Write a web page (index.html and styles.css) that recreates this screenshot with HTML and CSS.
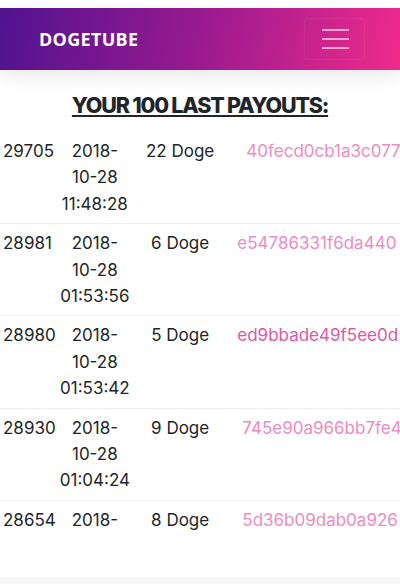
FILE: index.html
```html
<!DOCTYPE html>
<html lang="en">
<head>
<meta charset="UTF-8">
<meta name="viewport" content="width=device-width, initial-scale=1.0">
<title>DogeTube - Payouts</title>
<link rel="stylesheet" href="styles.css">
</head>
<body>
<nav class="navbar">
    <a class="brand" href="#">DOGETUBE</a>
    <button class="toggler" type="button" aria-label="Toggle navigation">
        <span class="toggler-bar"></span>
        <span class="toggler-bar"></span>
        <span class="toggler-bar"></span>
    </button>
</nav>

<div class="content">
    <h2 class="title">YOUR 100 LAST PAYOUTS:</h2>
    <div class="table-wrap">
    <table class="payouts">
        <tbody>
            <tr>
                <td class="id">29705</td>
                <td class="date">2018-10-28 11:48:28</td>
                <td class="amount">22 Doge</td>
                <td class="tx"><a href="#" class="shift-2">40fecd0cb1a3c077</a></td>
            </tr>
            <tr>
                <td class="id">28981</td>
                <td class="date">2018-10-28 01:53:56</td>
                <td class="amount">6 Doge</td>
                <td class="tx"><a href="#">e54786331f6da440</a></td>
            </tr>
            <tr>
                <td class="id">28980</td>
                <td class="date">2018-10-28 01:53:42</td>
                <td class="amount">5 Doge</td>
                <td class="tx"><a href="#" class="visited">ed9bbade49f5ee0d</a></td>
            </tr>
            <tr>
                <td class="id">28930</td>
                <td class="date">2018-10-28 01:04:24</td>
                <td class="amount">9 Doge</td>
                <td class="tx"><a href="#" class="shift-1">745e90a966bb7fe4</a></td>
            </tr>
            <tr>
                <td class="id">28654</td>
                <td class="date">2018-10-27 19:22:10</td>
                <td class="amount">8 Doge</td>
                <td class="tx"><a href="#" class="shift-1">5d36b09dab0a926</a></td>
            </tr>
        </tbody>
    </table>
    </div>
</div>

<footer class="footer"></footer>
</body>
</html>
```

FILE: styles.css
```css
body {
    margin: 0;
    padding: 8px 0 0;
    font-family: Inter, "Liberation Sans", sans-serif;
    color: #212529;
    background-color: #fff;
    overflow-x: hidden;
}

.navbar {
    display: flex;
    align-items: center;
    justify-content: space-between;
    height: 62px;
    padding: 0 35px 0 39px;
    background: linear-gradient(100deg, #50138f 0%, #9a1a8f 50%, #f02a8c 100%);
    box-shadow: 0 6px 18px rgba(0, 0, 0, 0.09);
    box-sizing: border-box;
}

.brand {
    color: #fff;
    font-family: "Open Sans", sans-serif;
    font-weight: 700;
    font-size: 18px;
    letter-spacing: 0.3px;
    text-decoration: none;
}

.toggler {
    display: flex;
    flex-direction: column;
    justify-content: center;
    gap: 7px;
    width: 61px;
    height: 42px;
    padding: 0 17px;
    background: transparent;
    border: 1px solid rgba(255, 255, 255, 0.05);
    border-radius: 4px;
    box-sizing: border-box;
}

.toggler-bar {
    display: block;
    width: 27px;
    height: 2px;
    background-color: rgba(255, 255, 255, 0.6);
}

.content {
    padding-top: 22px;
}

.title {
    margin: 0 0 14px;
    text-align: center;
    font-size: 21.5px;
    font-weight: 800;
    letter-spacing: -1.2px;
    line-height: 26px;
    text-decoration: underline;
    text-decoration-thickness: 2px;
    text-underline-offset: 2px;
}

.table-wrap {
    overflow: hidden;
}

.payouts {
    border-collapse: collapse;
    font-size: 17px;
    line-height: 26.4px;
}

.payouts td {
    padding: 6px 2px;
    text-align: center;
    vertical-align: top;
    border-top: 1px solid #eceeef;
}

.payouts tr:first-child td {
    border-top: none;
}

.payouts td.id {
    padding-left: 3px;
    text-align: left;
}

.payouts td.amount {
    padding-left: 14px;
    padding-right: 19px;
    white-space: nowrap;
}

.payouts td.tx {
    width: 100%;
    padding-left: 4px;
    text-align: left;
    white-space: nowrap;
}

.tx a {
    color: #ec8cc0;
    text-decoration: none;
}

.tx a.visited {
    color: #dc58a4;
}

/* the hashes are centred in the source, so they start at slightly different x */
.tx a.shift-1 {
    padding-left: 5px;
}

.tx a.shift-2 {
    padding-left: 9px;
}

.footer {
    position: fixed;
    left: 0;
    right: 0;
    bottom: 0;
    height: 52px;
    background-color: #fff;
    border-bottom: 7px solid #f8f8f8;
    box-sizing: border-box;
}
```
